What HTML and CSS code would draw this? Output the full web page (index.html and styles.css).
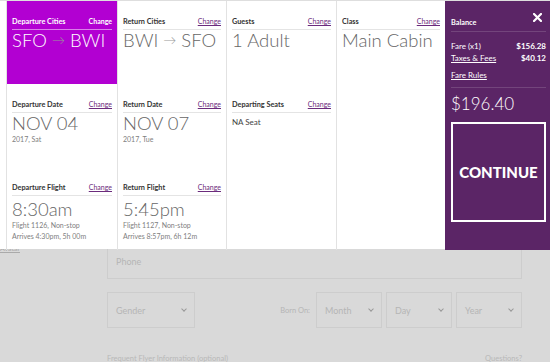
FILE: index.html
```html
<!DOCTYPE html>
<html lang="en">
<head>
    <meta charset="UTF-8">
    <meta name="viewport" content="width=device-width, initial-scale=1.0">
    <title>Review Trip</title>
    <link rel="stylesheet" href="styles.css">
</head>
<body>
    <div class="page">
        <a class="prev-link" href="#">Avatar</a>
        <div class="form">
            <div class="field phone">Phone</div>
            <div class="form-row">
                <div class="field select gender">Gender <span class="chev"></span></div>
                <span class="born-label">Born On:</span>
                <div class="field select small">Month <span class="chev"></span></div>
                <div class="field select small">Day <span class="chev"></span></div>
                <div class="field select small">Year <span class="chev"></span></div>
            </div>
            <div class="ff-row">
                <span>Frequent Flyer Information (optional)</span>
                <span>Questions?</span>
            </div>
        </div>
    </div>

    <div class="summary">
        <div class="col">
            <div class="cell active">
                <div class="cell-head"><span class="label">Departure Cities</span><a class="change" href="#">Change</a></div>
                <div class="value">SFO <span class="arrow">→</span> BWI</div>
            </div>
            <div class="cell">
                <div class="cell-head"><span class="label">Departure Date</span><a class="change" href="#">Change</a></div>
                <div class="value">NOV 04</div>
                <div class="sub">2017, Sat</div>
            </div>
            <div class="cell">
                <div class="cell-head"><span class="label">Departure Flight</span><a class="change" href="#">Change</a></div>
                <div class="value flight">8:30am</div>
                <div class="sub">Flight 1126, Non-stop</div>
                <div class="sub">Arrives 4:30pm, 5h 00m</div>
            </div>
        </div>
        <div class="col">
            <div class="cell">
                <div class="cell-head"><span class="label">Return Cities</span><a class="change" href="#">Change</a></div>
                <div class="value">BWI <span class="arrow">→</span> SFO</div>
            </div>
            <div class="cell">
                <div class="cell-head"><span class="label">Return Date</span><a class="change" href="#">Change</a></div>
                <div class="value">NOV 07</div>
                <div class="sub">2017, Tue</div>
            </div>
            <div class="cell">
                <div class="cell-head"><span class="label">Return Flight</span><a class="change" href="#">Change</a></div>
                <div class="value flight">5:45pm</div>
                <div class="sub">Flight 1127, Non-stop</div>
                <div class="sub">Arrives 8:57pm, 6h 12m</div>
            </div>
        </div>
        <div class="col">
            <div class="cell">
                <div class="cell-head"><span class="label">Guests</span><a class="change" href="#">Change</a></div>
                <div class="value">1 Adult</div>
            </div>
            <div class="cell">
                <div class="cell-head"><span class="label">Departing Seats</span><a class="change" href="#">Change</a></div>
                <div class="seat">NA Seat</div>
            </div>
        </div>
        <div class="col">
            <div class="cell">
                <div class="cell-head"><span class="label">Class</span><a class="change" href="#">Change</a></div>
                <div class="value">Main Cabin</div>
            </div>
        </div>
        <div class="balance">
            <div class="balance-head">
                <span class="label">Balance</span>
                <svg class="close" width="9" height="9" viewBox="0 0 9 9"><path d="M1 1L8 8M8 1L1 8" stroke="#fff" stroke-width="2.2" stroke-linecap="square"/></svg>
            </div>
            <div class="fare-row"><span>Fare (x1)</span><b>$156.28</b></div>
            <div class="fare-row"><a href="#">Taxes &amp; Fees</a><b>$40.12</b></div>
            <div class="fare-rules"><a href="#">Fare Rules</a></div>
            <div class="total">$196.40</div>
            <a class="continue" href="#">CONTINUE</a>
        </div>
    </div>
</body>
</html>
```

FILE: styles.css
```css
html, body {
    margin: 0;
    padding: 0;
    height: 100%;
    overflow: hidden;
}

body {
    background: #d9d9d9;
    font-family: "Lato", "Open Sans", sans-serif;
}

/* page behind the overlay */
.page {
    padding-top: 243px;
}

.prev-link {
    display: block;
    width: 22px;
    margin-top: 2px;
    height: 0;
    font-size: 7px;
    line-height: 7px;
    color: #aaa;
    overflow: visible;
}

.form {
    margin-left: 107px;
    width: 415px;
}

.field {
    box-sizing: border-box;
    border: 1px solid #cdcdcd;
    color: #b5b5b5;
    font-size: 9px;
    display: flex;
    align-items: center;
    padding: 0 8px;
}

.phone {
    height: 36px;
    margin-top: -2px;
}

.form-row {
    display: flex;
    align-items: center;
    gap: 4px;
    margin-top: 13px;
}

.select {
    height: 36px;
    justify-content: space-between;
}

.gender {
    width: 88px;
}

.small {
    width: 66px;
}

.born-label {
    margin-left: auto;
    margin-right: 2px;
    color: #b5b5b5;
    font-size: 7.5px;
}

.chev {
    width: 3px;
    height: 3px;
    border-right: 1px solid #999;
    border-bottom: 1px solid #999;
    transform: rotate(45deg);
    margin-top: -3px;
}

.ff-row {
    display: flex;
    justify-content: space-between;
    margin-top: 26px;
    color: #b8b8b8;
    font-size: 7.5px;
    line-height: 9px;
}

/* trip summary overlay */
.summary {
    position: absolute;
    top: 0;
    left: 0;
    width: 550px;
    height: 249px;
    box-sizing: border-box;
    padding-left: 6px;
    background: #fff;
    border-top: 1px solid #dedede;
    display: grid;
    grid-template-columns: 111px 109px 110px 109px 1fr;
}

.col {
    border-left: 1px solid #e2e2e2;
    display: flex;
    flex-direction: column;
}

.cell {
    height: 83px;
    box-sizing: border-box;
    padding: 16px 5px 0 5px;
    color: #666;
}

.cell.active {
    background: #b200d2;
    color: #fff;
}

.cell-head {
    display: flex;
    justify-content: space-between;
    align-items: baseline;
    padding-bottom: 3px;
    border-bottom: 1px solid #e4e4e4;
}

.cell.active .cell-head {
    border-bottom-color: rgba(255, 255, 255, 0.5);
}

.label {
    font-size: 7.3px;
    line-height: 9px;
    font-weight: 700;
    color: #333;
}

.cell.active .label {
    color: #fff;
}

.change {
    font-size: 7px;
    color: #6b2b7c;
}

.cell.active .change {
    color: #fff;
    text-decoration: none;
    font-weight: 700;
}

.value {
    font-size: 18.5px;
    line-height: 22px;
    font-weight: 300;
    margin-top: -1px;
    white-space: nowrap;
}

.value.flight {
    margin-top: 2px;
}

.arrow {
    color: #999;
    font-size: 13px;
    vertical-align: 2px;
}

.sub {
    font-size: 7px;
    line-height: 11px;
    color: #808080;
}

.seat {
    font-size: 8px;
    margin-top: 4px;
    color: #444;
}

/* balance sidebar */
.balance {
    background: #5b2566;
    color: #fff;
    padding: 12px 4px 0 6px;
    display: flex;
    flex-direction: column;
}

.balance-head {
    display: flex;
    justify-content: space-between;
    align-items: flex-end;
    padding-bottom: 4px;
    border-bottom: 1px solid rgba(255, 255, 255, 0.15);
}

.balance-head .label {
    color: #fff;
}

.close {
    margin: 0 4px 5px 0;
}

.fare-row {
    display: flex;
    justify-content: space-between;
    font-size: 8px;
    line-height: 12px;
}

.balance-head + .fare-row {
    margin-top: 8px;
}

.fare-row b {
    font-weight: 700;
}

.balance a {
    color: #fff;
}

.fare-rules {
    font-size: 8px;
    line-height: 12px;
    margin-top: 5px;
    padding-bottom: 6px;
    border-bottom: 1px solid rgba(255, 255, 255, 0.15);
}

.total {
    font-size: 17px;
    line-height: 24px;
    font-weight: 300;
    margin-top: 4px;
}

.balance .continue {
    margin-top: 6px;
    height: 100px;
    border: 2px solid #fff;
    box-sizing: border-box;
    display: flex;
    align-items: center;
    justify-content: center;
    font-size: 15px;
    font-weight: 900;
    text-decoration: none;
}
```
